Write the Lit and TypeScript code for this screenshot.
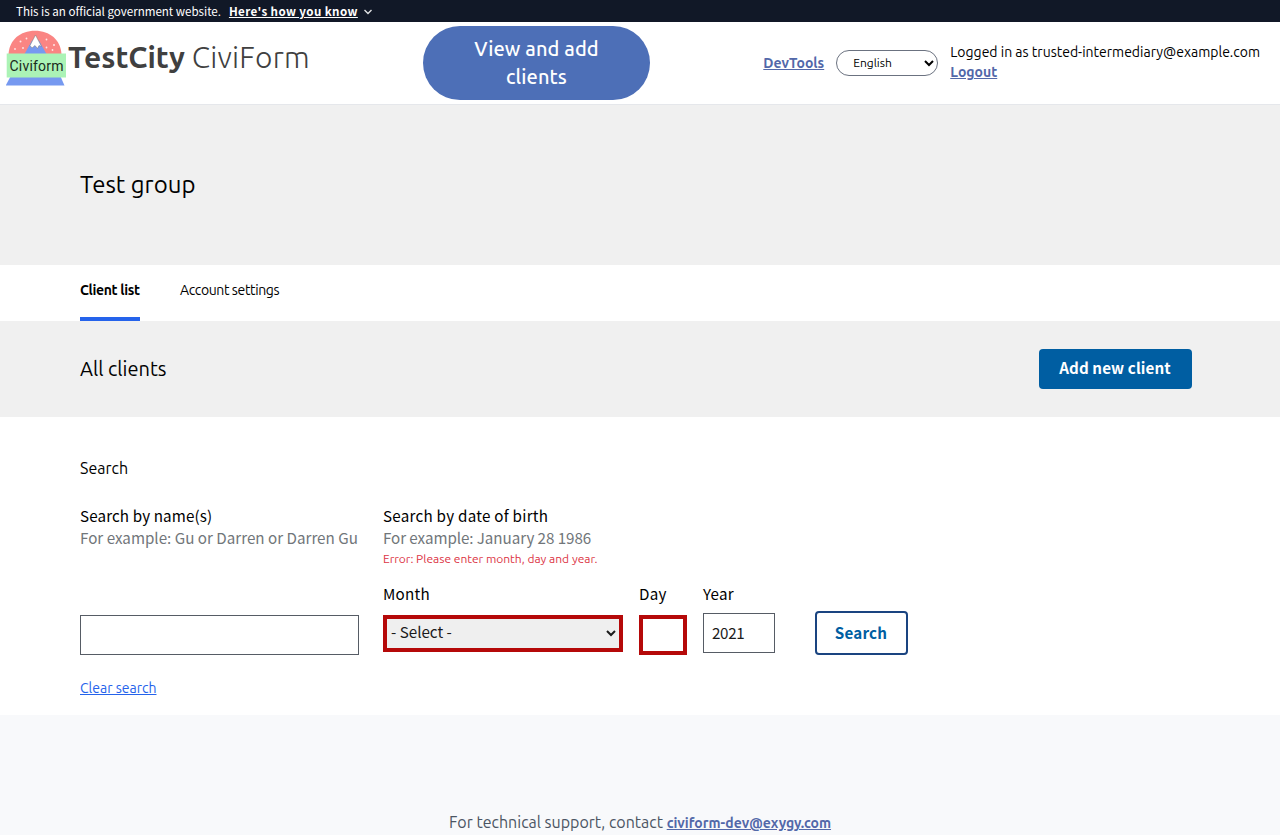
import { LitElement, html, css } from "lit";
import { customElement } from "lit/decorators.js";

@customElement("app-logo")
class AppLogo extends LitElement {
  static styles = css`
    :host { display: block; width: 62px; height: 57px; }
    svg { display: block; }
    .name { font: 14px Roboto, sans-serif; }
  `;
  render() {
    return html`<svg width="62" height="57" viewBox="0 0 62 57">
      <path d="M2.500 24C3.500 10 14 .8 29 .8S54.500 10 55.500 24Z" fill="#fa8583" />
      <path d="M18.500 24 26 10.500h7L40.500 24Z" fill="#7699f0" />
      <path d="M29.500 5 35.500 16.500 33 15.500 31.500 18.500 29 15.500 26 18 24 15.500Z" fill="#fff" stroke="#777" stroke-width=".5" />
      <g fill="#fff" opacity=".8">
        <circle cx="14.500" cy="11.500" r="1" /><circle cx="20.500" cy="8.500" r=".9" />
        <circle cx="17" cy="18" r=".9" /><circle cx="9" cy="19" r=".9" />
        <circle cx="40.500" cy="9.500" r=".9" /><circle cx="40.500" cy="17.500" r=".9" />
        <circle cx="48" cy="15" r="1" /><circle cx="46.500" cy="20" r=".9" />
      </g>
      <path d="M4.500 46.500h50l4 9H-.3Z" fill="#7699f0" />
      <path d="M.7 23.500h59.300v24H.7Z" fill="#abf3b6" />
      <text class="name" x="3.500" y="41.200" textLength="54" fill="#1a2a20">Civiform</text>
    </svg>`;
  }
}

@customElement("app-root")
class AppRoot extends LitElement {
  static styles = css`
    :host {
      display: block; height: 835px; overflow: hidden; background: #fff; color: #000;
      --ui: Ubuntu, "Noto Sans", sans-serif;
      --form: "Noto Sans CJK JP", "Noto Sans", sans-serif;
      font-family: var(--ui);
    }
    * { box-sizing: border-box; }
    h1, h2, h3, p { margin: 0; font-weight: 400; }
    .banner {
      height: 22px; padding: 0 16px; background: #111827; color: #fff;
      display: flex; align-items: center; gap: 8px;
      font: 11.600px/22px var(--form); white-space: nowrap;
    }
    .official { letter-spacing: -.02px; }
    .know { font-weight: 700; letter-spacing: .38px; text-decoration: underline; }
    .chevron { margin-left: -3px; margin-top: 2px; }
    .header {
      height: 83px; border-bottom: 1px solid #e5e7eb; padding-right: 20px;
      display: flex; align-items: flex-start;
    }
    .brand { width: 423px; padding: 8px 0 0 6px; display: flex; }
    .title { font-size: 30px; line-height: 36px; margin-top: 9px; color: #404040; white-space: pre; }
    .title b { font-weight: 700; }
    .title span { font-weight: 300; letter-spacing: .2px; }
    .cta {
      width: 227px; height: 74px; margin-top: 4px; padding: 9px 32px; border: 0; border-radius: 37px;
      background: #4d6fb7; color: #fff; font: 500 20px/28px var(--ui); letter-spacing: .1px;
    }
    .account { margin-left: auto; height: 82px; display: flex; align-items: center; font-size: 14px; line-height: 20px; }
    .who { margin-top: -2px; }
    .link { color: #5268a9; font-weight: 600; text-decoration: underline; }
    .lang {
      width: 102px; height: 26px; margin: 0 12px; padding: 0 0 1px 12px; border: 1px solid #6b7280;
      border-radius: 13px; background: #fff; color: #000; font: 12px var(--ui);
    }
    .group { height: 160px; padding: 64px 80px 0; background: #f0f0f0; line-height: 32px; }
    .group h1 { font-size: 24px; }
    .tabs { height: 56px; padding: 0 80px; display: flex; gap: 40px; font-size: 14px; line-height: 20px; letter-spacing: -.38px; }
    .tab { padding-top: 15px; height: 56px; }
    .tab.active { width: 60px; white-space: nowrap; font-weight: 600; letter-spacing: -.35px; border-bottom: 4px solid #2563eb; }
    .bar { height: 96px; padding: 0 88px 0 80px; background: #f0f0f0; display: flex; align-items: center; justify-content: space-between; }
    .bar h2 { font-size: 20px; line-height: 28px; }
    .add {
      width: 153px; height: 40px; border: 0; border-radius: 4px; background: #005ea2; color: #fff; padding: 0 1px 4px 0;
      font: 700 15.200px/20px var(--form); letter-spacing: .1px; white-space: nowrap;
    }
    .search { height: 298px; padding: 39px 80px 0; }
    .search h3 { font-size: 16px; line-height: 24px; }
    .fields { display: flex; height: 151px; margin-top: 24px; font: 15.200px/22px var(--form); white-space: nowrap; }
    .name { width: 279px; margin-right: 24px; display: flex; flex-direction: column; justify-content: space-between; }
    .label { color: #000; letter-spacing: .12px; }
    .dob .label { letter-spacing: .25px; }
    .hint { color: #71767a; }
    .dob .hint { letter-spacing: -.07px; }
    .error { font: 12px/16px var(--ui); color: #dc3545; margin-top: 3px; }
    .row { display: flex; gap: 16px; margin-top: 15px; }
    .cell { display: flex; flex-direction: column; }
    .text { border: 1px solid #565c65; height: 40px; padding: 0 8px 2px; background: #fff; color: #1b1b1b; font: 15.200px/20px var(--form); border-radius: 0; }
    .name .text { width: 279px; }
    .bad { border: 4px solid #b50909; }
    .month { width: 240px; height: 37px; margin-top: 11px; padding: 0 0 5px; border-radius: 0; background: #efefef; color: #1b1b1b; font: 15.200px var(--form); }
    .day { width: 48px; margin-top: 11px; }
    .year { width: 72px; margin-top: 9px; letter-spacing: -.35px; }
    .go {
      width: 93px; height: 44px; margin: 107px 0 0 40px; padding: 0 1px 3px 0; border: 2px solid #1a4480; border-radius: 4px;
      background: #fff; color: #005ea2; font: 700 15.200px/20px var(--form); letter-spacing: .2px;
    }
    .clear { display: inline-block; margin-top: 23px; color: #2563eb; font-size: 14px; line-height: 20px; text-decoration: underline; }
    .footer { height: 120px; padding-top: 95px; background: #f8f9fb; color: #4b5563; text-align: center; font-size: 16px; line-height: 24px; }
    .footer .link { font-size: 14px; }
  `;

  render() {
    return html`
      <div class="banner">
        <span class="official">This is an official government website.</span>
        <span class="know">Here's how you know</span>
        <svg class="chevron" width="10" height="6" viewBox="0 0 10 6" fill="none" stroke="#dfe1e2" stroke-width="1.400"><path d="M1.500 1 5 4.500 8.500 1" /></svg>
      </div>
      <header class="header">
        <div class="brand"><app-logo></app-logo><div class="title"><b>TestCity</b> <span>CiviForm</span></div></div>
        <button class="cta">View and add clients</button>
        <div class="account">
          <a class="link">DevTools</a>
          <select class="lang"><option>English</option></select>
          <div class="who"><div>Logged in as trusted-intermediary@example.com</div><a class="link">Logout</a></div>
        </div>
      </header>
      <section class="group"><h1>Test group</h1></section>
      <nav class="tabs"><a class="tab active">Client list</a><a class="tab">Account settings</a></nav>
      <section class="bar"><h2>All clients</h2><button class="add">Add new client</button></section>
      <section class="search">
        <h3>Search</h3>
        <div class="fields">
          <div class="name">
            <div><div class="label">Search by name(s)</div><div class="hint">For example: Gu or Darren or Darren Gu</div></div>
            <input class="text" />
          </div>
          <div class="dob">
            <div class="label">Search by date of birth</div>
            <div class="hint">For example: January 28 1986</div>
            <div class="error">Error: Please enter month, day and year.</div>
            <div class="row">
              <label class="cell"><span class="label">Month</span><select class="month bad"><option>- Select -</option></select></label>
              <label class="cell"><span class="label">Day</span><input class="text bad day" /></label>
              <label class="cell"><span class="label">Year</span><input class="text year" value="2021" /></label>
            </div>
          </div>
          <button class="go">Search</button>
        </div>
        <a class="clear">Clear search</a>
      </section>
      <footer class="footer">For technical support, contact <a class="link">civiform-dev@exygy.com</a></footer>
    `;
  }
}
